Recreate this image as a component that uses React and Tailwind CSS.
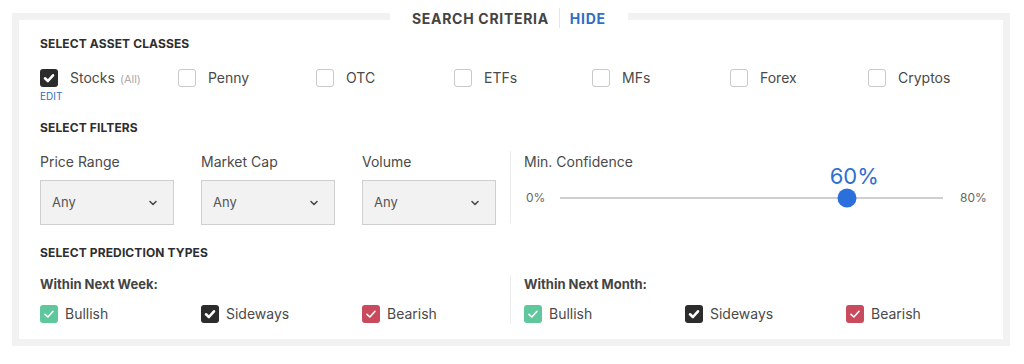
import React from "react";

const font = { fontFamily: "Inter, 'Noto Sans', sans-serif" };

function Check({ color = "white", w = 2.4 }) {
  return (
    <svg viewBox="0 0 18 18" className="w-[18px] h-[18px]">
      <path d="M5 9.3 L7.9 12 L13 6.3" fill="none" stroke={color} strokeWidth={w} strokeLinecap="round" strokeLinejoin="round" />
    </svg>
  );
}

function Box({ checked, tone }) {
  if (!checked) {
    return <span className="w-[18px] h-[18px] shrink-0 rounded-[3px] border border-[#c9c9c9] bg-white" />;
  }
  const bg = tone === "green" ? "bg-[#5ec79c]" : tone === "red" ? "bg-[#c84a5c]" : "bg-[#2c2c2c]";
  const thin = tone === "green" || tone === "red";
  return (
    <span className={`w-[18px] h-[18px] shrink-0 rounded-[3px] ${bg} flex items-center justify-center`}>
      <Check w={thin ? 1.6 : 2.6} />
    </span>
  );
}

function Heading({ children, className = "" }) {
  return (
    <div className={`text-[12px] leading-[16px] font-bold uppercase tracking-[0.01em] text-[#2e2e2e] ${className}`}>
      {children}
    </div>
  );
}

function Select({ label }) {
  return (
    <div className="w-[134px] shrink-0 flex flex-col">
      <div className="text-[14px] leading-[20px] text-[#4a4a4a]">{label}</div>
      <div className="mt-[8px] h-[45px] bg-[#f2f2f2] border border-[#cfcfcf] flex items-center justify-between pl-[11px] pr-[15px]">
        <span className="text-[13px] text-[#555]">Any</span>
        <svg viewBox="0 0 10 10" className="w-[10px] h-[10px]">
          <path d="M2 3.5 L5 6.5 L8 3.5" fill="none" stroke="#4a4a4a" strokeWidth="1.6" strokeLinecap="round" strokeLinejoin="round" />
        </svg>
      </div>
    </div>
  );
}

function PredRow({ title }) {
  const items = [
    ["Bullish", "green"],
    ["Sideways", "dark"],
    ["Bearish", "red"],
  ];
  return (
    <div>
      <div className="text-[13px] leading-[18px] font-bold text-[#444]">{title}</div>
      <div className="mt-[11px] flex">
        {items.map(([t, tone]) => (
          <div key={t} className="w-[161px] shrink-0 flex items-center gap-[7px]">
            <Box checked tone={tone} />
            <span className="text-[14px] leading-[20px] text-[#4a4a4a]">{t}</span>
          </div>
        ))}
      </div>
    </div>
  );
}

export default function App() {
  const assets = ["Stocks", "Penny", "OTC", "ETFs", "MFs", "Forex", "Cryptos"];
  return (
    <div className="w-[1024px] h-[364px] bg-white pt-[4px]" style={font}>
      <fieldset className="ml-[12px] w-[998px] border-[7px] border-[#f2f2f2] pl-[21px] pr-[10px] pt-[8px] pb-[15px] min-w-0">
        <legend className="ml-[350px] px-[22px] pt-[4px]">
          <span className="flex items-center h-[20px]">
            <span className="text-[14px] font-bold tracking-[0.05em] text-[#444]">SEARCH CRITERIA</span>
            <span className="mx-[10px] w-px h-[20px] bg-[#e6e6e6]" />
            <span className="text-[14px] font-bold tracking-[0.05em] text-[#2f6fc4]">HIDE</span>
          </span>
        </legend>

        <Heading>Select Asset Classes</Heading>
        <div className="mt-[16px] flex">
          {assets.map((a, i) => (
            <div key={a} className="w-[138px] shrink-0 flex flex-col">
              <div className="flex items-center gap-[12px] h-[20px]">
                <Box checked={i === 0} />
                <span className="text-[14px] leading-[20px] text-[#4a4a4a]">
                  {a}
                  {i === 0 && <span className="ml-[5px] text-[11px] text-[#aaa]">(All)</span>}
                </span>
              </div>
              {i === 0 && <div className="mt-[2px] text-[10px] leading-[12px] text-[#2f6fc4]">EDIT</div>}
            </div>
          ))}
        </div>

        <Heading className="mt-[18px]">Select Filters</Heading>
        <div className="mt-[16px] flex">
          <div className="w-[470px] shrink-0 flex gap-[27px]">
            <Select label="Price Range" />
            <Select label="Market Cap" />
            <Select label="Volume" />
          </div>
          <div className="border-l border-[#ececec] pl-[13px] flex-1 h-[72px] -mt-[1px] pt-[1px]">
            <div className="text-[14px] leading-[20px] text-[#4a4a4a]">Min. Confidence</div>
            <div className="mt-[16px] flex items-center h-[20px]">
              <span className="w-[36px] pl-[2px] text-[12px] text-[#666]">0%</span>
              <div className="relative w-[383px] h-[2px] bg-[#cfcfcf]">
                <span className="absolute left-[75%] top-[1px] -translate-x-1/2 -translate-y-1/2 w-[19px] h-[19px] rounded-full bg-[#2b6fdd]" />
                <span className="absolute left-[75%] -top-[33px] -translate-x-1/2 ml-[7px] text-[22px] leading-[24px] text-[#2f6fcf]">60%</span>
              </div>
              <span className="ml-[17px] text-[12px] text-[#666]">80%</span>
            </div>
          </div>
        </div>

        <Heading className="mt-[20px]">Select Prediction Types</Heading>
        <div className="mt-[14px] flex">
          <div className="w-[470px] shrink-0">
            <PredRow title="Within Next Week:" />
          </div>
          <div className="border-l border-[#ececec] pl-[13px] flex-1">
            <PredRow title="Within Next Month:" />
          </div>
        </div>
      </fieldset>
    </div>
  );
}
